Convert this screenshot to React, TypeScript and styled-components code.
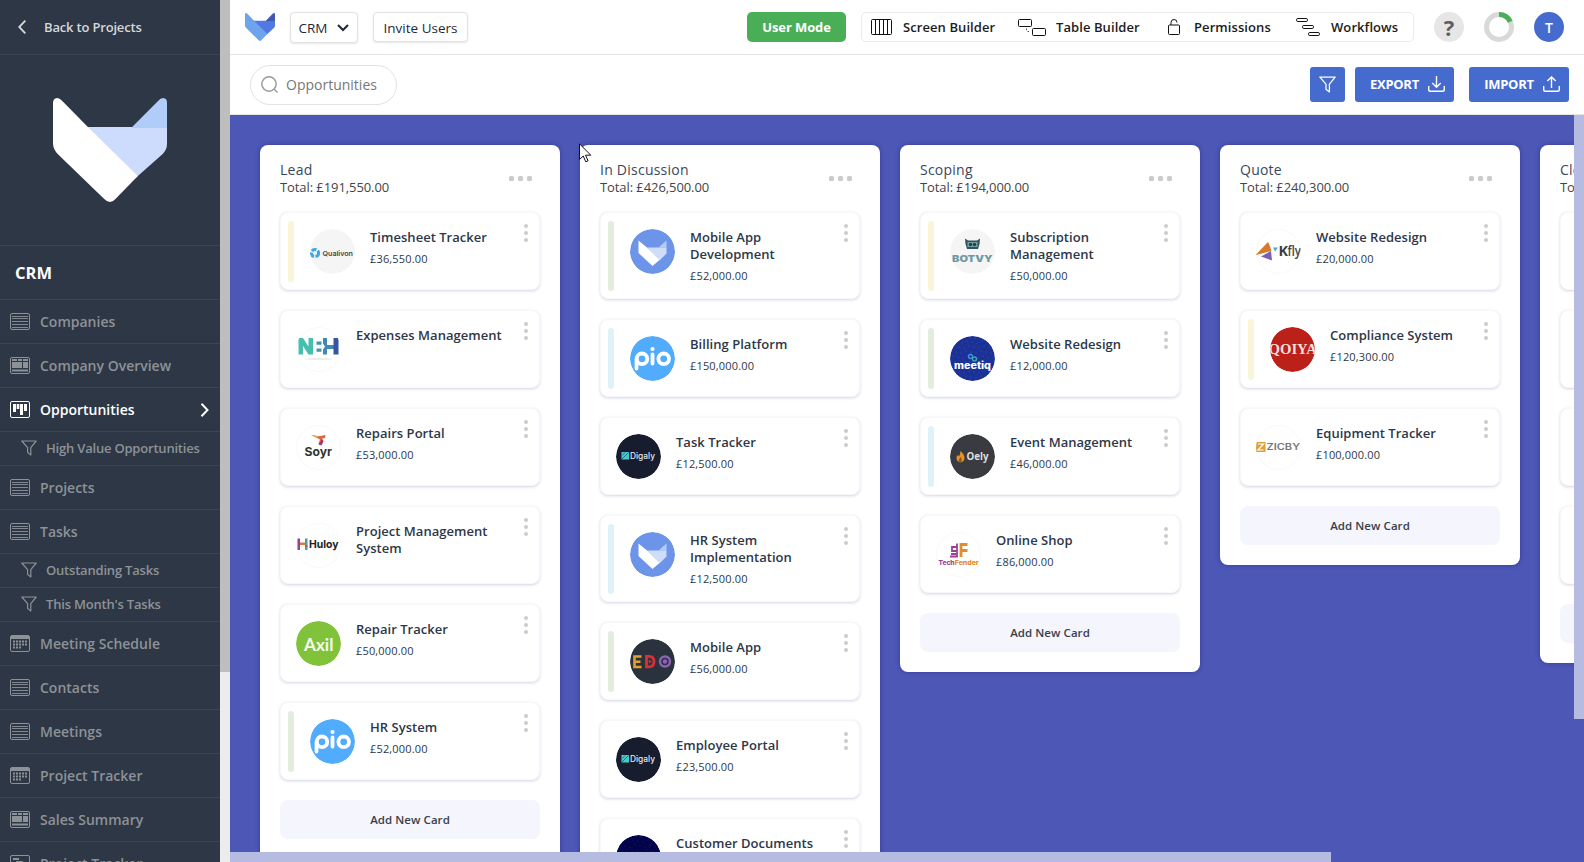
import React from "react";
import styled, { createGlobalStyle } from "styled-components";

const GlobalStyle = createGlobalStyle`
  * { box-sizing: border-box; }
  html, body { margin: 0; padding: 0; overflow: hidden; }
  body { font-family: "Open Sans", sans-serif; color: #2d3748; background: #fff; }
  button, input { font-family: inherit; margin: 0; }
  svg { display: block; flex: none; }
`;

/* ---------- layout ---------- */

const Page = styled.div`
  display: flex;
  width: 1584px;
  height: 862px;
  overflow: hidden;
`;

const Sidebar = styled.aside`
  width: 220px;
  flex: none;
  background: #2d3745;
  overflow: hidden;
`;

const SidebarScroll = styled.div`
  width: 10px;
  flex: none;
  background: #ececec;
`;

const SidebarThumb = styled.div`
  height: 672px;
  background: #bebebe;
`;

const Main = styled.main`
  flex: 1;
  min-width: 0;
  display: flex;
  flex-direction: column;
`;

/* ---------- sidebar ---------- */

const BackLink = styled.a`
  display: flex;
  align-items: center;
  height: 55px;
  padding: 0 0 1px 18px;
  gap: 18px;
  border-bottom: 1px solid #394552;
  color: #d6d8da;
  font-size: 13px;
  font-weight: 600;
  letter-spacing: -0.18px;
`;

const BrandPanel = styled.div`
  height: 191px;
  padding: 43px 0 0 53px;
  border-bottom: 1px solid #394552;
`;

const ProjectName = styled.h1`
  margin: 0;
  height: 54px;
  padding-left: 15px;
  border-bottom: 1px solid #394552;
  color: #fff;
  font-size: 16.5px;
  line-height: 53px;
  font-weight: 700;
`;

const NavRow = styled.a<{ $active?: boolean; $sub?: boolean }>`
  display: flex;
  align-items: center;
  height: ${(p) => (p.$sub ? 34 : 44)}px;
  padding: ${(p) => (p.$sub ? "0 15px 1px 21px" : "0 10px 0 10px")};
  gap: ${(p) => (p.$sub ? 9 : 10)}px;
  border-bottom: 1px solid #394552;
  color: ${(p) => (p.$active ? "#fff" : "#8d9298")};
  font-size: ${(p) => (p.$sub ? 13 : 14)}px;
  letter-spacing: ${(p) => (p.$sub ? -0.2 : 0)}px;
  font-weight: 600;
  white-space: nowrap;
`;

const NavLabel = styled.span`
  flex: 1;
`;

/* ---------- header ---------- */

const Header = styled.header`
  display: flex;
  align-items: flex-start;
  height: 55px;
  padding: 12px 20px 0 15px;
  border-bottom: 1px solid #e4e4e4;
`;

const LogoSlot = styled.div`
  width: 45px;
  padding-top: 1px;
`;

const OutlineButton = styled.button<{ $w: number; $h: number }>`
  display: flex;
  align-items: center;
  justify-content: center;
  gap: 10px;
  width: ${(p) => p.$w}px;
  height: ${(p) => p.$h}px;
  padding: 1px 0 0;
  margin-right: 15px;
  background: #fff;
  border: 1px solid #e2e2e2;
  border-radius: 4px;
  box-shadow: 0 1px 2px rgba(0, 0, 0, 0.1);
  color: #1f2937;
  font-size: 13.500px;
`;

const ModeButton = styled.button`
  width: 99px;
  height: 30px;
  margin-left: auto;
  margin-right: 15px;
  padding: 0;
  border: 0;
  border-radius: 5px;
  background: #4aae57;
  color: #fff;
  font-size: 13px;
  font-weight: 700;
  letter-spacing: -0.1px;
`;

const ToolGroup = styled.nav`
  display: flex;
  align-items: center;
  width: 553px;
  height: 30px;
  padding-left: 9px;
  margin-right: 20px;
  border: 1px solid #ebebeb;
  border-radius: 5px;
`;

const Tool = styled.a<{ $w: number; $icon: number }>`
  display: grid;
  grid-template-columns: ${(p) => p.$icon}px auto;
  justify-content: start;
  align-items: center;
  width: ${(p) => p.$w}px;
  color: #1c1c1c;
  font-size: 13px;
  font-weight: 600;
  letter-spacing: 0.08px;
  white-space: nowrap;
`;

const RoundBadge = styled.div<{ $bg: string; $fg: string; $size: number; $weight: number }>`
  display: flex;
  align-items: center;
  justify-content: center;
  width: 30px;
  height: 30px;
  flex: none;
  border-radius: 50%;
  background: ${(p) => p.$bg};
  color: ${(p) => p.$fg};
  font-size: ${(p) => p.$size}px;
  font-weight: ${(p) => p.$weight};
`;

const RingSlot = styled.div`
  margin: 0 20px;
`;

/* ---------- toolbar ---------- */

const Toolbar = styled.div`
  display: flex;
  align-items: center;
  height: 60px;
  padding: 0 15px 0 20px;
  border-bottom: 1px solid #e4e4e4;
`;

const SearchPill = styled.label`
  display: flex;
  align-items: center;
  gap: 8px;
  width: 147px;
  height: 40px;
  margin-right: auto;
  padding-left: 10px;
  border: 1px solid #e2e2e2;
  border-radius: 20px;
  color: #777;
  font-size: 14px;
`;

const SolidButton = styled.button<{ $w: number; $gap?: number; $shift?: number }>`
  display: flex;
  align-items: center;
  justify-content: center;
  gap: 9px;
  width: ${(p) => p.$w}px;
  height: 35px;
  margin: 0 0 1px ${(p) => p.$gap ?? 0}px;
  padding: 0 0 0 ${(p) => p.$shift ?? 0}px;
  border: 0;
  border-radius: 3px;
  background: #466bcf;
  color: #fff;
  font-size: 13px;
  font-weight: 700;
  letter-spacing: -0.3px;
`;

/* ---------- board ---------- */

const BoardFrame = styled.section`
  display: grid;
  grid-template-columns: 1344px 10px;
  grid-template-rows: 737px 10px;
  height: 747px;
  background: #4c57b6;
`;

const Board = styled.div`
  display: flex;
  align-items: flex-start;
  gap: 20px;
  padding: 30px 0 0 30px;
  overflow: hidden;
`;

const BoardVThumb = styled.div`
  height: 604px;
  background: #b6bbe1;
`;

const BoardHThumb = styled.div`
  width: 1101px;
  background: #b6bbe1;
`;

const Column = styled.div`
  display: flex;
  flex-direction: column;
  gap: 20px;
  width: 300px;
  flex: none;
  padding: 0 20px 20px;
  border-radius: 8px;
  background: #fff;
  box-shadow: 0 0 4px rgba(40, 30, 120, 0.5);
`;

const ColumnHead = styled.div`
  display: flex;
  justify-content: space-between;
  height: 47px;
  padding-top: 15px;
`;

const ColumnTitle = styled.h2`
  margin: 0;
  color: #3b4759;
  font-size: 14px;
  line-height: 20px;
  font-weight: 400;
  letter-spacing: 0.24px;
`;

const ColumnTotal = styled.div`
  color: #444;
  font-size: 13px;
  line-height: 15px;
  letter-spacing: -0.08px;
  white-space: nowrap;
`;

const HDots = styled.div`
  display: flex;
  gap: 4px;
  padding: 16px 8px 0 0;
`;

const VDots = styled.div`
  display: flex;
  flex-direction: column;
  gap: 3px;
  margin-left: auto;
  padding: 4px 4px 0 0;
`;

const Dot = styled.i<{ $size: number }>`
  width: ${(p) => p.$size}px;
  height: ${(p) => p.$size}px;
  border-radius: ${(p) => (p.$size > 4 ? 1.5 : 2)}px;
  background: #cbcbcb;
`;

const CardBox = styled.article`
  display: flex;
  flex: none;
  min-height: 78px;
  padding: 7px;
  border: 1px solid #f8f8fb;
  border-radius: 8px;
  background: #fff;
  box-shadow: 0 1px 3px rgba(60, 60, 140, 0.22);
`;

const Stripe = styled.div<{ $color: string }>`
  width: 6px;
  margin: 1px 8px 0 0;
  border-radius: 3px;
  background: ${(p) => p.$color};
`;

const Avatar = styled.div`
  width: 45px;
  height: 45px;
  flex: none;
  margin: 9px 15px 0 8px;
`;

const CardText = styled.div<{ $narrow?: boolean }>`
  width: ${(p) => (p.$narrow ? 140 : 154)}px;
  flex: none;
  padding: 9px 0 7px;
`;

const CardTitle = styled.h3`
  margin: 0;
  font-size: 13px;
  line-height: 17px;
  font-weight: 600;
  letter-spacing: 0.03px;
`;

const CardAmount = styled.div`
  margin-top: 5px;
  font-size: 11px;
  line-height: 16px;
  letter-spacing: 0.16px;
`;

const AddButton = styled.button`
  height: 39px;
  flex: none;
  padding: 0;
  border: 0;
  border-radius: 8px;
  background: #f4f5fd;
  color: #3a3f4a;
  font-size: 11.5px;
  font-weight: 600;
  letter-spacing: 0.06px;
`;

const Cursor = styled.svg`
  position: absolute;
  left: 579px;
  top: 143px;
`;

/* ---------- drawings ---------- */

const FoxMark = ({ w, h, body, face, ear }: { w: number; h: number; body: string; face: string; ear: string }) => (
  <svg width={w} height={h} viewBox="0 0 340 312" preserveAspectRatio="none">
    <path d="M104 87L90 90L246 241L253 234L328 167Q340 154 340 138V87Z" fill={face} />
    <path d="M236 87L314 8Q320 0 329 0Q340 1 340 14V90H236Z" fill={ear} />
    <path d="M0 14Q1 1 12 0Q20 0 27 8L104 87L253 234L187 302Q178 312 170 312Q162 312 152 302L14 168Q1 154 0 138Z" fill={body} />
  </svg>
);

const ListIcon = () => (
  <svg width="20" height="17" viewBox="0 0 20 17" fill="none" stroke="currentColor">
    <rect x=".5" y=".5" width="19" height="16" rx="1.5" />
    <path d="M2 3.5h16M2 5.5h16M2 8.5h16M2 11.5h16M2 14.5h16" strokeWidth=".9" />
  </svg>
);
const OverviewIcon = () => (
  <svg width="20" height="17" viewBox="0 0 20 17" fill="none" stroke="currentColor">
    <rect x=".5" y=".5" width="19" height="16" rx="1.5" />
    <path fill="currentColor" stroke="none" d="M2 2h5v2H2zM8 2h4v2H8zM13 2h5v2h-5zM2 5h10v6H2zM13 5h5v6h-5zM2 12.5h16v2H2z" />
  </svg>
);
const KanbanIcon = () => (
  <svg width="20" height="17" viewBox="0 0 20 17" fill="none" stroke="currentColor">
    <rect x=".5" y=".5" width="19" height="16" rx="1.5" />
    <path fill="currentColor" stroke="none" d="M3 3h3v8H3zM6.700 3h2.600v5H6.700zM10 3h3v11h-3zM14 3h3v7h-3z" />
  </svg>
);
const CalendarIcon = () => (
  <svg width="20" height="17" viewBox="0 0 20 17" fill="none" stroke="currentColor">
    <rect x=".5" y=".5" width="19" height="16" rx="1.5" />
    <path d="M1 2.500h18" strokeWidth="3" />
    <path d="M3 6.500h14M3 9.500h14M3 12.500h8" strokeWidth="2" strokeDasharray="2 1" />
  </svg>
);
const GanttIcon = () => (
  <svg width="20" height="17" viewBox="0 0 20 17" fill="none" stroke="currentColor">
    <rect x=".5" y=".5" width="19" height="16" rx="1.5" />
    <path d="M3 4h6M6 7h7M9 10h8" strokeWidth="2" />
  </svg>
);
const Funnel = ({ size = 16, sw = 1.2 }: { size?: number; sw?: number }) => (
  <svg width={size} height={size} viewBox="0 0 16 16" fill="none" stroke="currentColor" strokeWidth={sw} strokeLinejoin="round">
    <path d="M.8 1h14.400L9.800 7.600v7.400L6.600 12.400V7.600Z" />
  </svg>
);

const icons = {
  list: ListIcon,
  overview: OverviewIcon,
  kanban: KanbanIcon,
  calendar: CalendarIcon,
  gantt: GanttIcon,
  filter: () => <Funnel />,
};

const Disc = ({ fill, ring, children }: { fill: string; ring?: boolean; children: React.ReactNode }) => (
  <svg width="45" height="45" viewBox="0 0 45 45">
    <defs>
      <clipPath id="disc"><circle cx="22.5" cy="22.5" r="22.5" /></clipPath>
    </defs>
    <g clipPath="url(#disc)">
      <circle cx="22.5" cy="22.5" r={ring ? 22.1 : 22.5} fill={fill} stroke={ring ? "#f3f3f3" : "none"} strokeWidth=".7" />
      {children}
    </g>
  </svg>
);

const Word = ({ x, y, w, size, fill, font = "Lato", weight = 700, children }: {
  x: number; y: number; w: number; size: number; fill: string; font?: string; weight?: number; children: string;
}) => (
  <text x={x} y={y} textLength={w} lengthAdjust="spacingAndGlyphs" fontFamily={`"${font}", sans-serif`} fontWeight={weight} fontSize={size} fill={fill}>
    {children}
  </text>
);

const speckles = (color: string) =>
  Array.from({ length: 81 }, (_, i) => (
    <circle key={i} cx={(i % 9) * 5 + ((Math.floor(i / 9) * 2) % 5)} cy={Math.floor(i / 9) * 5 + (i % 3)} r=".5" fill={color} />
  ));

const logos: Record<string, () => React.ReactElement> = {
  qualivon: () => (
    <Disc fill="#f5f5f5">
      <circle cx="5" cy="24" r="3.600" fill="none" stroke="#3fa6e6" strokeWidth="3" strokeDasharray="5 1.500" />
      <Word x={12.5} y={27} w={30.500} size={6.800} fill="#444" font="Inter" weight={600}>Qualivon</Word>
    </Disc>
  ),
  nbh: () => (
    <Disc fill="#fff" ring>
      <ellipse cx="23" cy="32" rx="14" ry="1.200" fill="#ececec" />
      <path d="M2.500 11h4.500l5.500 8.500V11h4.500v16.500h-4.500l-5.500-8.500v8.500h-4.500Z" fill="#48bfae" />
      <path d="M20.500 14.500h5v3.200h-5zM20.500 21.500h5v3.200h-5z" fill="#4394b5" />
      <path d="M27 11h4v7h7v4h-7v5.500h-4v-5l2-3-2-3Z" fill="#3f89b2" />
      <path d="M37.500 11h5v16.500h-5z" fill="#3654a0" />
    </Disc>
  ),
  soyr: () => (
    <Disc fill="#fff" ring>
      <path d="M15 10l8 1.200 6.500-1.200-.5 3-3 .800 1 3-1.500 3-3-1 1.500-4-2-1.500Z" fill="#e0663d" />
      <path d="M15 10l7 1.200-1 1.800Z" fill="#e4a93b" />
      <path d="M26 14l1.500 2-2 4.500-3-1Z" fill="#a53372" />
      <Word x={8.5} y={30.800} w={27.500} size={12} fill="#333" font="Inter" weight={700}>Soyr</Word>
    </Disc>
  ),
  huloy: () => (
    <Disc fill="#fff" ring>
      <path d="M1.500 15.500h2.500v11.500H1.500z" fill="#97408e" />
      <path d="M9 15.500h2.500v11.500H9z" fill="#3aa7a5" />
      <path d="M4 19.500h5v2.500H4z" fill="#e5763d" />
      <path d="M9 22h2.500v2H9z" fill="#e04949" />
      <Word x={13} y={25} w={29.500} size={10.800} fill="#222" font="Inter" weight={700}>Huloy</Word>
    </Disc>
  ),
  axil: () => (
    <Disc fill="#80c33b">
      <Word x={8} y={29.500} w={29.500} size={16.500} fill="#f4faec">Axil</Word>
    </Disc>
  ),
  pio: () => (
    <Disc fill="#51acfe">
      <g fill="none" stroke="#fff" strokeWidth="3.800" strokeLinecap="round">
        <circle cx="12" cy="22.800" r="5.300" />
        <path d="M6.500 23v9.500M22.500 18.500v9" />
        <circle cx="33.700" cy="22.800" r="5.300" />
      </g>
      <circle cx="22.500" cy="13" r="2.100" fill="#fff" />
    </Disc>
  ),
  fox: () => (
    <Disc fill="#6c94e8">
      <g transform="translate(8.500 11.500)">
        <path d="M8.500 7h19.500v6l-7 7Z" fill="#cfddf9" />
        <path d="M20 7l8-7v7.200Z" fill="#b5cdf6" />
        <path d="M0 0l8.500 7 12.500 12.500-7 6L0 12.500Z" fill="#fff" />
      </g>
    </Disc>
  ),
  digaly: () => (
    <Disc fill="#171c2e">
      <path d="M5.500 18h7.500v7.500H5.500z" fill="#4cc9c4" />
      <path d="M6 25l6.500-6.500M9 18.500l-3 3" stroke="#1f6f94" strokeWidth="1" />
      <Word x={14} y={25} w={25} size={8.600} fill="#e8e8ea" font="Inter" weight={500}>Digaly</Word>
    </Disc>
  ),
  edo: () => (
    <Disc fill="#2a323e">
      <path d="M11.500 17.500H4.500v10.500h7M4.500 22.700h6" fill="none" stroke="#dfa132" strokeWidth="2.600" />
      <path d="M16.500 17.300h2.500q5 0 5 5.300t-5 5.300h-2.500Z" fill="none" stroke="#dc2f35" strokeWidth="2.800" />
      <path d="M18.800 20.500l3 2-3 2Z" fill="#dc2f35" />
      <circle cx="35" cy="22.500" r="5" fill="none" stroke="#8e62b5" strokeWidth="2.400" />
      <circle cx="35" cy="22.500" r="2.200" fill="#8e62b5" />
    </Disc>
  ),
  navy: () => <Disc fill="#03034b">{speckles("#26267a")}</Disc>,
  botvy: () => (
    <Disc fill="#f5f5f5">
      <path d="M15 9.500l3 2h9l3-2-.5 5.500-1.500 5h-11l-1.500-5Z" fill="#35525a" />
      <path d="M17.500 13h10v5h-10z" fill="#6fa5a6" />
      <circle cx="20.500" cy="15.500" r="1.700" fill="#2b3d46" />
      <circle cx="24.500" cy="15.500" r="1.700" fill="#2b3d46" />
      <Word x={2} y={32.700} w={40.500} size={8.800} fill="#6d9ba2" font="Inter" weight={900}>BOTVY</Word>
    </Disc>
  ),
  meetiq: () => (
    <Disc fill="#1b3196">
      {speckles("#455cc2")}
      <g fill="none" strokeWidth="1.400">
        <circle cx="20.500" cy="20.500" r="2" stroke="#3e8fe0" />
        <circle cx="24.500" cy="23" r="2" stroke="#39a7a9" />
      </g>
      <Word x={4} y={32.700} w={37} size={9.500} fill="#fff" font="Inter" weight={800}>meetiq</Word>
    </Disc>
  ),
  oely: () => (
    <Disc fill="#3a3b40">
      <path d="M10.500 17q4 3.500 4 7t-4 4.500q-4-1-4-4.500 0-2.500 1.500-3l1 1.500q1.500-3 1.500-5.500Z" fill="#ec8f25" />
      <path d="M10.500 23q2 2 1 4.500t-3-1Z" fill="#7a5a25" />
      <Word x={16.500} y={26} w={22} size={10} fill="#dedede" font="Open Sans" weight={700}>Oely</Word>
    </Disc>
  ),
  techfender: () => (
    <Disc fill="#fff" ring>
      <path d="M21 11.500v13h-7M21 15h-5v4h5M15 22h5" fill="none" stroke="#9b3f9b" strokeWidth="1.800" />
      <path d="M31.500 12.500H25V25M31.500 18.500H25" fill="none" stroke="#e08d2c" strokeWidth="2.800" />
      <Word x={2.500} y={32.700} w={16} size={6.300} fill="#96409a" font="Inter" weight={800}>Tech</Word>
      <Word x={18.800} y={32.700} w={24} size={6.300} fill="#df8a2c" font="Inter" weight={800}>Fender</Word>
    </Disc>
  ),
  kfly: () => (
    <Disc fill="#fff" ring>
      <path d="M-.5 26L12 13l1.500 3 2 6Z" fill="#d67a2b" />
      <path d="M5 27.500l10-5.500 1 9.500Z" fill="#7a5fb8" />
      <path d="M17 18.500h5l-3 4Z" fill="#4fa9df" />
      <Word x={22.500} y={26.500} w={9.500} size={13.500} fill="#3c3c3c" font="Open Sans">K</Word>
      <Word x={31.500} y={26.500} w={13.500} size={13.500} fill="#444" font="Open Sans" weight={600}>fly</Word>
    </Disc>
  ),
  qoiya: () => (
    <Disc fill="#bb2019">
      <Word x={-1.500} y={26.500} w={48.500} size={15} fill="#f3dfdc" font="Liberation Serif" weight={700}>QOIYA</Word>
    </Disc>
  ),
  zicby: () => (
    <Disc fill="#fff" ring>
      <path d="M0 17h9.500v10H0z" fill="#dda03a" />
      <path d="M2 19h5.500L2 25h5.500" fill="none" stroke="#fff" strokeWidth="1.200" />
      <Word x={10.500} y={25} w={33.500} size={8.300} fill="#777" font="Inter" weight={600}>ZICBY</Word>
    </Disc>
  ),
};

/* ---------- data ---------- */

type CardData = { title: string; amount?: string; logo: string; stripe?: string };
const YELLOW = "#f9f5d8";
const GREEN = "#e2eddd";
const BLUE = "#dff1f9";

const columns: { title: string; total: string; cards: CardData[] }[] = [
  {
    title: "Lead",
    total: "£191,550.00",
    cards: [
      { title: "Timesheet Tracker", amount: "£36,550.00", logo: "qualivon", stripe: YELLOW },
      { title: "Expenses Management", logo: "nbh" },
      { title: "Repairs Portal", amount: "£53,000.00", logo: "soyr" },
      { title: "Project Management System", logo: "huloy" },
      { title: "Repair Tracker", amount: "£50,000.00", logo: "axil" },
      { title: "HR System", amount: "£52,000.00", logo: "pio", stripe: GREEN },
    ],
  },
  {
    title: "In Discussion",
    total: "£426,500.00",
    cards: [
      { title: "Mobile App Development", amount: "£52,000.00", logo: "fox", stripe: GREEN },
      { title: "Billing Platform", amount: "£150,000.00", logo: "pio", stripe: BLUE },
      { title: "Task Tracker", amount: "£12,500.00", logo: "digaly" },
      { title: "HR System Implementation", amount: "£12,500.00", logo: "fox", stripe: BLUE },
      { title: "Mobile App", amount: "£56,000.00", logo: "edo", stripe: GREEN },
      { title: "Employee Portal", amount: "£23,500.00", logo: "digaly" },
      { title: "Customer Documents", logo: "navy" },
    ],
  },
  {
    title: "Scoping",
    total: "£194,000.00",
    cards: [
      { title: "Subscription Management", amount: "£50,000.00", logo: "botvy", stripe: YELLOW },
      { title: "Website Redesign", amount: "£12,000.00", logo: "meetiq", stripe: GREEN },
      { title: "Event Management", amount: "£46,000.00", logo: "oely", stripe: BLUE },
      { title: "Online Shop", amount: "£86,000.00", logo: "techfender" },
    ],
  },
  {
    title: "Quote",
    total: "£240,300.00",
    cards: [
      { title: "Website Redesign", amount: "£20,000.00", logo: "kfly" },
      { title: "Compliance System", amount: "£120,300.00", logo: "qoiya", stripe: YELLOW },
      { title: "Equipment Tracker", amount: "£100,000.00", logo: "zicby" },
    ],
  },
];

const nav: { label: string; icon: keyof typeof icons; active?: boolean; sub?: boolean }[] = [
  { label: "Companies", icon: "list" },
  { label: "Company Overview", icon: "overview" },
  { label: "Opportunities", icon: "kanban", active: true },
  { label: "High Value Opportunities", icon: "filter", sub: true },
  { label: "Projects", icon: "list" },
  { label: "Tasks", icon: "list" },
  { label: "Outstanding Tasks", icon: "filter", sub: true },
  { label: "This Month's Tasks", icon: "filter", sub: true },
  { label: "Meeting Schedule", icon: "calendar" },
  { label: "Contacts", icon: "list" },
  { label: "Meetings", icon: "list" },
  { label: "Project Tracker", icon: "calendar" },
  { label: "Sales Summary", icon: "overview" },
  { label: "Project Tracker", icon: "gantt" },
];

/* ---------- parts ---------- */

const Card = ({ card }: { card: CardData }) => {
  const Logo = logos[card.logo];
  return (
    <CardBox>
      {card.stripe && <Stripe $color={card.stripe} />}
      <Avatar><Logo /></Avatar>
      <CardText $narrow={!!card.stripe}>
        <CardTitle>{card.title}</CardTitle>
        {card.amount && <CardAmount>{card.amount}</CardAmount>}
      </CardText>
      <VDots><Dot $size={4} /><Dot $size={4} /><Dot $size={4} /></VDots>
    </CardBox>
  );
};

const ColumnTop = ({ title, total }: { title: string; total: string }) => (
  <ColumnHead>
    <div>
      <ColumnTitle>{title}</ColumnTitle>
      <ColumnTotal>Total: {total}</ColumnTotal>
    </div>
    <HDots><Dot $size={5} /><Dot $size={5} /><Dot $size={5} /></HDots>
  </ColumnHead>
);

export default function App() {
  return (
    <Page>
      <GlobalStyle />
      <Sidebar>
        <BackLink>
          <svg width="8" height="14" viewBox="0 0 8 14" fill="none" stroke="currentColor" strokeWidth="1.800">
            <path d="M7.300.7L1.200 7l6.100 6.300" />
          </svg>
          Back to Projects
        </BackLink>
        <BrandPanel>
          <FoxMark w={114} h={104} body="#ffffff" face="#cddcfd" ear="#afcdf8" />
        </BrandPanel>
        <ProjectName>CRM</ProjectName>
        {nav.map((item, i) => {
          const Icon = icons[item.icon];
          return (
            <NavRow key={i} $active={item.active} $sub={item.sub}>
              <Icon />
              <NavLabel>{item.label}</NavLabel>
              {item.active && (
                <svg width="10" height="14" viewBox="0 0 10 14" fill="none" stroke="currentColor" strokeWidth="2">
                  <path d="M1.500.8L7.500 7l-6 6.200" />
                </svg>
              )}
            </NavRow>
          );
        })}
      </Sidebar>
      <SidebarScroll><SidebarThumb /></SidebarScroll>
      <Main>
        <Header>
          <LogoSlot><FoxMark w={30} h={28} body="#6ea4ee" face="#5278e2" ear="#4257b0" /></LogoSlot>
          <OutlineButton $w={68} $h={31}>
            CRM
            <svg width="12" height="8" viewBox="0 0 12 8" fill="none" stroke="currentColor" strokeWidth="2">
              <path d="M1 1l5 5 5-5" />
            </svg>
          </OutlineButton>
          <OutlineButton $w={95} $h={30}>Invite Users</OutlineButton>
          <ModeButton>User Mode</ModeButton>
          <ToolGroup>
            <Tool $w={147} $icon={32}>
              <svg width="21" height="16" viewBox="0 0 21 16" fill="none" stroke="#111">
                <rect x=".5" y=".5" width="20" height="15" rx="1" />
                <path d="M4.500 0v16M8.500 0v16M12.500 0v16M16.500 0v16" />
              </svg>
              Screen Builder
            </Tool>
            <Tool $w={150} $icon={38}>
              <svg width="28" height="17" viewBox="0 0 28 17" fill="none" stroke="#111">
                <rect x=".5" y=".5" width="13" height="7" rx="1" />
                <rect x="14.500" y="9.500" width="13" height="7" rx="1" />
                <path d="M8.500 9.500v1.500M9.500 12.500h1.500" stroke="#555" />
              </svg>
              Table Builder
            </Tool>
            <Tool $w={128} $icon={26}>
              <svg width="12" height="16" viewBox="0 0 12 16" fill="none" stroke="#111">
                <rect x=".5" y="6" width="11" height="9.500" rx="1" />
                <path d="M3 6V3.500Q3 .5 6 .5t3 3" />
              </svg>
              Permissions
            </Tool>
            <Tool $w={104} $icon={35}>
              <svg width="24" height="18" viewBox="0 0 24 18" fill="none" stroke="#111">
                <rect x=".5" y=".5" width="11" height="3" rx="1.300" />
                <rect x="6.500" y="7.500" width="11" height="3" rx="1.300" />
                <rect x="12.500" y="14.500" width="11" height="3" rx="1.300" />
              </svg>
              Workflows
            </Tool>
          </ToolGroup>
          <RoundBadge $bg="#e6e6e6" $fg="#5e5e5e" $size={22} $weight={700}>?</RoundBadge>
          <RingSlot>
            <svg width="30" height="30" viewBox="0 0 30 30" fill="none" strokeWidth="5">
              <circle cx="15" cy="15" r="12.500" stroke="#d9d9d9" />
              <path d="M15 2.500A12.500 12.500 0 0 1 26.300 9.700" stroke="#4aae57" />
            </svg>
          </RingSlot>
          <RoundBadge $bg="#466bcf" $fg="#fff" $size={14} $weight={600}>T</RoundBadge>
        </Header>
        <Toolbar>
          <SearchPill>
            <svg width="17" height="17" viewBox="0 0 17 17" fill="none" stroke="#999" strokeWidth="1.400">
              <circle cx="8" cy="8" r="7.200" />
              <path d="M13 13l3.500 3.500" />
            </svg>
            Opportunities
          </SearchPill>
          <SolidButton $w={35}><Funnel size={17} /></SolidButton>
          <SolidButton $w={99} $gap={10} $shift={6}>
            EXPORT
            <svg width="17" height="16" viewBox="0 0 17 16" fill="none" stroke="currentColor" strokeWidth="1.400">
              <path d="M.7 10v3.500q0 1.800 1.800 1.800h12q1.800 0 1.800-1.800V10M8.500 0v11M4.300 7L8.500 11.200 12.700 7" />
            </svg>
          </SolidButton>
          <SolidButton $w={100} $gap={15} $shift={6}>
            IMPORT
            <svg width="17" height="16" viewBox="0 0 17 16" fill="none" stroke="currentColor" strokeWidth="1.400">
              <path d="M.7 10v3.500q0 1.800 1.800 1.800h12q1.800 0 1.800-1.800V10M8.500 12V1M4.300 5L8.500.9 12.700 5" />
            </svg>
          </SolidButton>
        </Toolbar>
        <BoardFrame>
          <Board>
            {columns.map((col) => (
              <Column key={col.title}>
                <ColumnTop title={col.title} total={col.total} />
                {col.cards.map((card, i) => <Card key={i} card={card} />)}
                <AddButton>Add New Card</AddButton>
              </Column>
            ))}
            <Column>
              <ColumnTop title="Closed" total="" />
              <CardBox /><CardBox /><CardBox /><CardBox />
              <AddButton />
            </Column>
          </Board>
          <BoardVThumb />
          <BoardHThumb />
        </BoardFrame>
      </Main>
      <Cursor width="13" height="20" viewBox="0 0 13 20">
        <path d="M.5.800V16.500L4.200 13l2.600 5.800 2.300-1L6.500 12.200h5.300Z" fill="#fff" stroke="#111" strokeWidth="1" />
      </Cursor>
    </Page>
  );
}
